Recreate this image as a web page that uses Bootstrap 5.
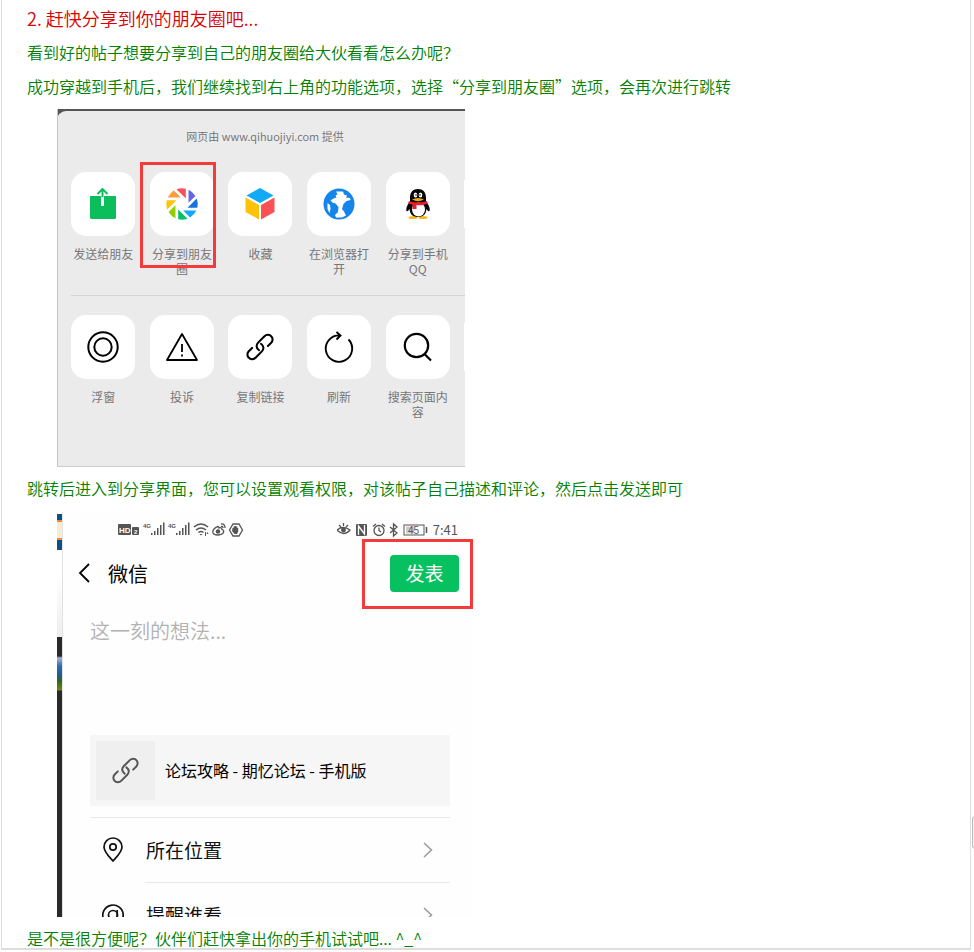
<!DOCTYPE html>
<html lang="zh-CN">
<head>
<meta charset="utf-8">
<meta name="viewport" content="width=device-width, initial-scale=1">
<title>赶快分享到你的朋友圈吧</title>
<link href="https://cdn.jsdelivr.net/npm/bootstrap@5.3.0/dist/css/bootstrap.min.css" rel="stylesheet">
<style>
body{font-family:"Noto Sans CJK SC",sans-serif;font-weight:350;background:#fff;color:#111}
svg{display:block;flex:none}
.post{margin:0 3px 0 1px;padding:1px 25px 0;border:solid #ddd;border-width:0 1px 2px;font-size:16px;line-height:34px;color:#008000}
.post h2{font-size:18px;line-height:34px;color:#d90000;font-weight:350;margin:0}
.post p{margin:0}
.post .ending{line-height:20px;padding-top:7px;height:27px}
.shot{margin:6px 0 4px 30px;line-height:15px;overflow:hidden}
.share{max-width:408px;background:#ebebec;border-left:1px solid #c4c4c4;border-bottom:1px solid #ccc}
.share-back{background:#555;padding-top:2px;margin-left:-1px}
.share-top{background:#ebebec;border-radius:9px 0 0 0;height:61px;padding:17px 0 0 8px;font-size:11px;line-height:16px;color:#707070}
.tiles{display:grid;grid-template-columns:repeat(5,1fr);padding:0 8px 0 6px;position:relative}
.tiles::after{content:"";position:absolute;right:0;top:8px;width:1px;height:48px;background:#fff}
.tile{border:0;background:none;padding:0;position:relative;display:flex;flex-direction:column;align-items:center;font-size:12px;line-height:15px;color:#777}
.tile i{display:flex;align-items:center;justify-content:center;width:64px;height:64px;border-radius:15px;background:#fff;color:#000;margin-bottom:10px}
.tile span{width:64px}
.hilite::after{content:"";position:absolute;border:3px solid #f43b3b}
.tile.hilite::after{left:-3px;top:-10px;width:76px;height:106px}
.upper{min-height:123px}
.rule{border-top:1px solid #d5d5d7;margin-left:13px}
.lower{margin-top:19px;min-height:151px}
.compose{max-width:416px;height:405px;margin-top:7px;margin-bottom:4px;font-weight:400}
.strip{width:5px;flex:none;background:linear-gradient(#fff 0 2px,#0b5283 2px 8px,#ef8a33 8px 10px,#f7ecd2 10px 26px,#ef8a33 26px 28px,#0b5283 28px 38px,#fff 38px 60px,#eee 125px,#29292b 125px 144px,#aab4d8 146px,#2b6cae 154px,#1f5c80 165px,#2b6b19 169px,#6c8421 178px,#29292b 179px)}
.screen{border-left:1px solid #e2e2e2;flex:1;min-width:0;background:#fefefe}
.status{padding:8px 15px 0 55px;height:28px;color:#555;font-size:13px;line-height:20px}
.titlebar{height:66px;padding:0 14px 0 15px;font-size:20px;color:#000}
.titlebar .back{border:0;background:none;padding:0}
.send{background:#07c160;color:#fff;border:0;border-radius:4px;width:69px;height:37px;font-size:19px;line-height:20px}
.sendwrap{position:relative}
.sendwrap::after{left:-28px;right:-14px;top:-16px;bottom:-17px}
.inner{padding:0 23px 0 27px}
.thought{display:block;border:0;background:none;resize:none;outline:0;width:100%;height:129px;padding:10px 0 0;font-size:20px;font-weight:350;line-height:30px;overflow:hidden}
.thought::placeholder{color:#b2b2b2;opacity:1}
.linkbox{background:#f6f6f6;padding:6px;color:#000;font-size:16px;height:71px;margin-bottom:11px}
.thumb{width:59px;height:59px;background:#efefef;margin-right:10px}
.option{color:#111;font-size:19px;height:64px;padding:0 17px 0 12px}
.option span{flex:1;margin-left:22px;line-height:30px}
.split{border-top:1px solid #e9e9e9}
.split-inset{margin-left:55px}
.sidetab{position:fixed;right:-10px;top:816px;width:12px;height:33px;border:1px solid #bbb;border-radius:3px;background:#f4f4f4;padding:0}
</style>
<script src="https://cdn.jsdelivr.net/npm/bootstrap@5.3.0/dist/js/bootstrap.bundle.min.js"></script>
</head>
<body>
<svg width="0" height="0" class="position-absolute" aria-hidden="true">
<symbol id="chain" viewBox="0 0 30 30"><g fill="none" stroke="currentColor" stroke-width="2.200" stroke-linecap="round"><path d="M14 18.500C10.500 16 10.800 12.500 13 10.300L19.500 3.800C22 1.200 25.500 1.500 27 3.500C29 5.500 29 8.500 27 10.500L23.500 14"/><path d="M16 11.500C19.500 14 19.200 17.500 17 19.700L10.500 26.200C8 28.800 4.500 28.500 3 26.500C1 24.500 1 21.500 3 19.500L6.500 16"/></g></symbol>
<symbol id="chev" viewBox="0 0 10 16"><path d="M1 1l7.500 7L1 15" fill="none" stroke="#999" stroke-width="1.500"/></symbol>
</svg>
<main class="post">
<h2>2. 赶快分享到你的朋友圈吧...</h2>
<p>看到好的帖子想要分享到自己的朋友圈给大伙看看怎么办呢？</p>
<p>成功穿越到手机后，我们继续找到右上角的功能选项，选择“分享到朋友圈”选项，会再次进行跳转</p>

<section class="shot share">
<div class="share-back"><div class="share-top text-center">网页由 www.qihuojiyi.com 提供</div></div>
<div class="tiles upper">
<button class="tile" type="button"><i><svg width="26" height="32" viewBox="0 0 26 32"><path d="M0 8h11v10h3V8h12v21.500a1.500 1.500 0 0 1-1.500 1.500h-23A1.500 1.500 0 0 1 0 29.500z" fill="#0abf5b"/><path d="M12.500 9V1.500M7.500 6l5-5 5 5" fill="none" stroke="#0abf5b" stroke-width="2"/></svg></i><span>发送给朋友</span></button>
<button class="tile hilite" type="button"><i><svg width="32" height="32" viewBox="-16 -16 32 32"><path d="M-5.500-14.700A15.700 15.700 0 0 1 3.800-15.200V-5.500z" fill="#f85058"/><path d="M-5.500-14.700A15.700 15.700 0 0 1 3.800-15.200V-5.500z" fill="#6567e8" transform="rotate(45)"/><path d="M-5.500-14.700A15.700 15.700 0 0 1 3.800-15.200V-5.500z" fill="#1772db" transform="rotate(90)"/><path d="M-5.500-14.700A15.700 15.700 0 0 1 3.800-15.200V-5.500z" fill="#10aaf6" transform="rotate(135)"/><path d="M-5.500-14.700A15.700 15.700 0 0 1 3.800-15.200V-5.500z" fill="#0abf68" transform="rotate(180)"/><path d="M-5.500-14.700A15.700 15.700 0 0 1 3.800-15.200V-5.500z" fill="#92cf00" transform="rotate(225)"/><path d="M-5.500-14.700A15.700 15.700 0 0 1 3.800-15.200V-5.500z" fill="#fdc40a" transform="rotate(270)"/><path d="M-5.500-14.700A15.700 15.700 0 0 1 3.800-15.200V-5.500z" fill="#fa9d3b" transform="rotate(315)"/></svg></i><span>分享到朋友圈</span></button>
<button class="tile" type="button"><i><svg width="30" height="32" viewBox="0 0 30 32"><path d="M15 0l13.500 7.500L15 15 1.500 7.500z" fill="#10aaf6"/><path d="M.500 9.500L14 17v14.500L.500 24z" fill="#fdc30a"/><path d="M29.500 9.500L16 17v14.500L29.500 24z" fill="#f95156"/></svg></i><span>收藏</span></button>
<button class="tile" type="button"><i><svg width="32" height="32" viewBox="0 0 32 32"><circle cx="16" cy="16" r="15.500" fill="#1585ea"/><path d="M13 3.500h7l1 3 3 1-1 2 4 .500.500 2-4 1-3 3-1.500 5 2 2.500 2 4-4 2h-6l-1-2.500 3-3 .500-5-3-3.500-3-1-2-2 3-2 3-1-1-2 2-1zM4.500 15l2.500 2 .500 4-1 4-2-4z" fill="#fff"/></svg></i><span>在浏览器打开</span></button>
<button class="tile" type="button"><i><svg width="26" height="32" viewBox="0 0 26 32"><ellipse cx="8" cy="29.500" rx="4.500" ry="1.500" fill="#f9b815"/><ellipse cx="18" cy="29.500" rx="4.500" ry="1.500" fill="#f9b815"/><path d="M5 10C5 4 8 1 13 1s8 3 8 9v3c2 3 4.500 7 3.500 10-1 1-2-.500-3-2C21 27 17.500 29 13 29S5 27 4.500 21c-1 1.500-2 3-3 2C.500 20 3 16 5 13z" fill="#050505"/><ellipse cx="13.500" cy="21.500" rx="6.500" ry="7" fill="#fff"/><path d="M4 13c6 2 12 2 18 0l.500 2.500c-4 2-8 2-11 1.500v4H7.500v-4.500L3 15.500z" fill="#e9202c"/><ellipse cx="10.500" cy="7" rx="1.800" ry="2.500" fill="#fff"/><ellipse cx="15.500" cy="7" rx="1.800" ry="2.500" fill="#fff"/><circle cx="11" cy="7" r=".8"/><circle cx="15" cy="7" r=".8"/><path d="M7 11.500q6-3 12 0-6 3.500-12 0" fill="#f9a40f"/></svg></i><span>分享到手机QQ</span></button>
</div>
<div class="rule"></div>
<div class="tiles lower">
<button class="tile" type="button"><i><svg width="32" height="32" viewBox="0 0 32 32" fill="none" stroke="#000" stroke-width="2"><circle cx="16" cy="16" r="14.700"/><circle cx="16" cy="16" r="8.700"/></svg></i><span>浮窗</span></button>
<button class="tile" type="button"><i><svg width="34" height="32" viewBox="0 0 34 32" fill="none" stroke="#000" stroke-width="1.800" stroke-linejoin="round"><path d="M17 3L32 29H2zM17 13v8M17 23.500v2"/></svg></i><span>投诉</span></button>
<button class="tile" type="button"><i><svg width="28" height="28"><use href="#chain"/></svg></i><span>复制链接</span></button>
<button class="tile" type="button"><i><svg width="32" height="32" viewBox="0 0 32 32" fill="none" stroke="#000" stroke-width="1.900"><path d="M25.500 8.500A13.200 13.200 0 1 1 17.500 4.500M13.500 1l4 3.500-4 4"/></svg></i><span>刷新</span></button>
<button class="tile" type="button"><i><svg width="30" height="30" viewBox="0 0 30 30" fill="none" stroke="#000" stroke-width="2.200"><circle cx="13.500" cy="13.500" r="11.700"/><path d="M21.500 22l6.500 6.500"/></svg></i><span>搜索页面内容</span></button>
</div>
</section>

<p>跳转后进入到分享界面，您可以设置观看权限，对该帖子自己描述和评论，然后点击发送即可</p>

<section class="shot compose d-flex">
<div class="strip"></div>
<div class="screen">
<div class="status d-flex justify-content-between">
<svg width="126" height="20" viewBox="0 0 126 20" fill="#555" font-family="Liberation Sans, sans-serif" font-weight="700"><rect y="4" width="13" height="11" rx="1"/><text x="1" y="13" font-size="8" fill="#fff">HD</text><rect x="14" y="7" width="7" height="8" rx="1"/><text x="16" y="14" font-size="6" fill="#fff">2</text>
<text x="25" y="8" font-size="6">4G</text><path d="M33 13h1.500v2H33zM36 11h1.500v4H36zM39 8h1.500v7H39zM42 5h1.500v10H42zM45 2.500h1.500V15H45z"/>
<text x="50" y="8" font-size="6">4G</text><path d="M58 13h1.500v2H58zM61 11h1.500v4H61zM64 8h1.500v7H64zM67 5h1.500v10H67zM70 2.500h1.500V15H70z"/>
<g fill="none" stroke="#555" stroke-width="1.500"><path d="M76 7q7-6 14 0M78 10q5-4 10 0M80.500 12.500q2.500-2 5 0"/></g><path d="M81.500 14h3L83 15.500zM87 12h1v4h-1zM89.500 12l1 2h-2z"/>
<g fill="none" stroke="#555" stroke-width="1.300"><path d="M100 6.500c-3 .500-6 4-5 6.500 1.500 3 9 2.500 10.500-.500.500-1.500 0-2.500-1.500-3 0-2-1.500-2-3-1.500 0-1-.500-1.500-1-1.500z"/><path d="M103 4q4-.500 4 4M103 6.500q2-.500 2 1.500"/></g><circle cx="100" cy="11.500" r="2.200"/>
<path d="M115 4h6l3.500 6-3.500 6h-6l-3.500-6z" fill="none" stroke="#555" stroke-width="1.300"/><path d="M114.500 8h1V6.500h1.200V6H118v.500h1.200V8h1v3.500l-1.200 2.500h-2.500l-2.500-3z"/></svg>
<div class="d-flex">
<svg width="96" height="20" viewBox="1 0 96 20" fill="none" stroke="#555" stroke-width="1.300"><path d="M1 10q6-5 13 0-6 7-13 0M3 5l2 2M7.500 3v3M12 5l-2 2"/><circle cx="7.500" cy="10" r="1.800" fill="#555"/><rect x="20" y="4" width="11" height="12" rx="1" fill="#555" stroke="none"/><path d="M22.500 15V6l6 8V5" stroke="#fff"/><circle cx="43" cy="10.500" r="5"/><path d="M43 7.500v3l2 1.500M37 6.500l3-2.500M49 6.500L46 4M54 7l7 6-3.500 3V4L61 7l-7 6"/><rect x="68" y="5" width="20" height="10" stroke-width="1"/><path d="M90.500 7v6" stroke-width="1.500"/><rect x="70" y="6.500" width="8" height="7" fill="#ccc" stroke="none"/><text x="72" y="14" font-size="10" fill="#555" stroke="none" font-family="Liberation Sans, sans-serif">45</text></svg>
<time>7:41</time></div>
</div>
<div class="titlebar d-flex align-items-center">
<button class="back" type="button" aria-label="返回"><svg width="14" height="20" viewBox="0 0 14 20"><path d="M11 1L2 10l9 9" fill="none" stroke="#000" stroke-width="1.800"/></svg></button>
<span class="ms-3 me-auto">微信</span>
<div class="sendwrap hilite"><button class="send" type="button">发表</button></div>
</div>
<div class="inner">
<textarea class="thought" aria-label="这一刻的想法" placeholder="这一刻的想法..."></textarea>
<a href="#" class="linkbox d-flex align-items-center text-decoration-none"><div class="thumb d-flex align-items-center justify-content-center"><svg width="27" height="27" color="#555"><use href="#chain"/></svg></div>论坛攻略 - 期忆论坛 - 手机版</a>
<div class="split"></div>
<a href="#" class="option d-flex align-items-center text-decoration-none"><svg width="22" height="26" viewBox="0 0 22 26" fill="none" stroke="#111" stroke-width="1.700"><path d="M11 24C7 19.500 2 15 2 10a9 9 0 0 1 18 0c0 5-5 9.500-9 14z"/><circle cx="11" cy="10" r="3.200"/></svg><span>所在位置</span><svg width="10" height="16"><use href="#chev"/></svg></a>
<div class="split split-inset"></div>
<a href="#" class="option d-flex align-items-center text-decoration-none"><svg width="22" height="24" viewBox="0 0 22 24" fill="none" stroke="#111" stroke-width="1.700"><path d="M17 20.500A10.200 10.200 0 1 1 21.200 12c0 5-6 6-6 2V7"/><circle cx="11" cy="12" r="4.500"/></svg><span>提醒谁看</span><svg width="10" height="16"><use href="#chev"/></svg></a>
</div>
</div>
</section>

<p class="ending">是不是很方便呢？伙伴们赶快拿出你的手机试试吧... ^_^</p>
</main>
<button class="sidetab" type="button" aria-label="侧栏"></button>
</body>
</html>
